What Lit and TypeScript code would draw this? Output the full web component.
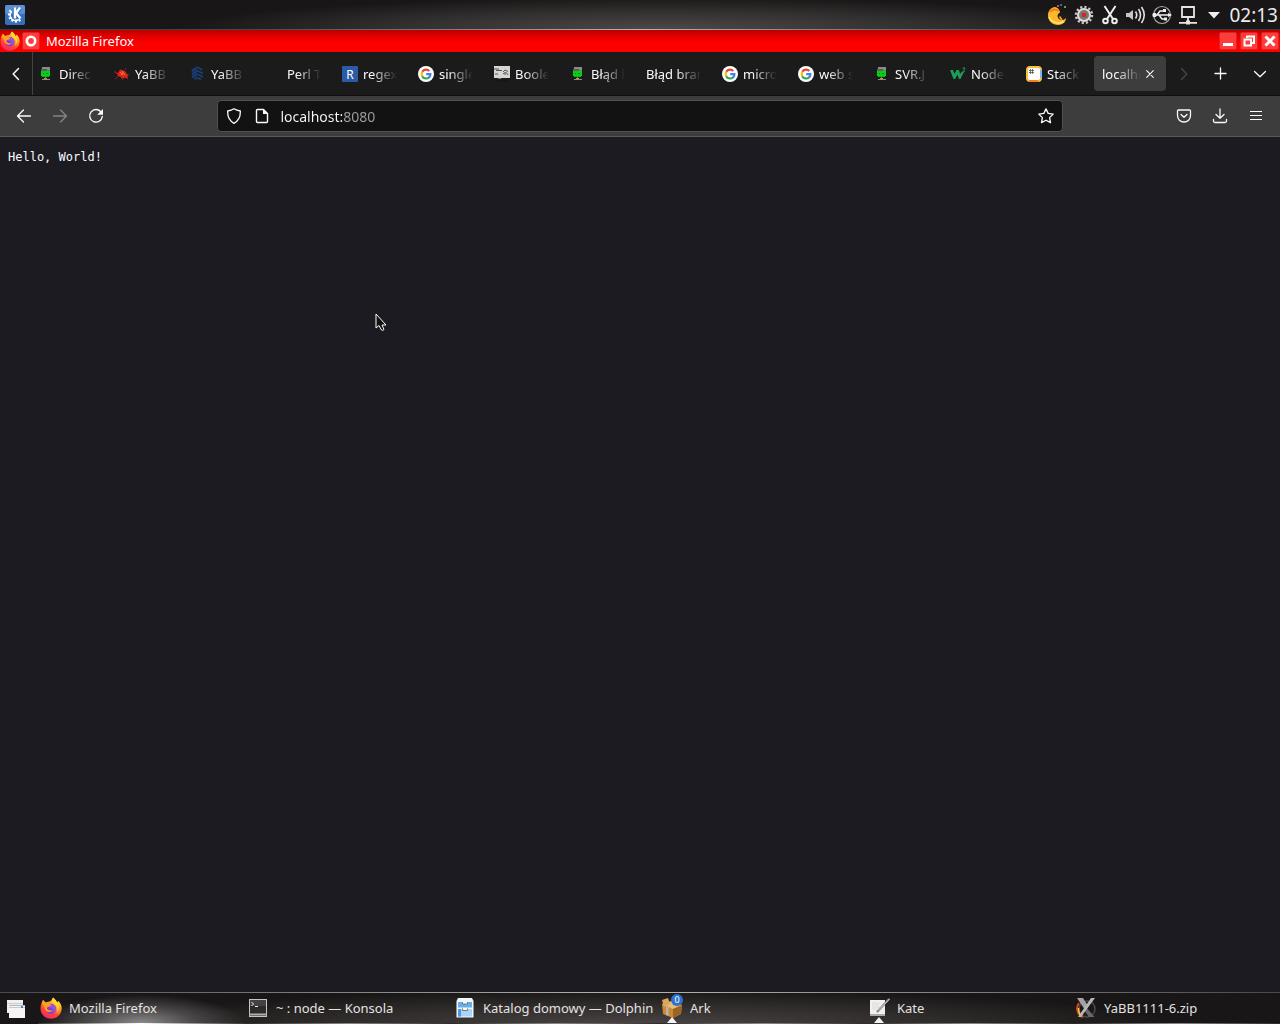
import { LitElement, html, svg, css, nothing, type SVGTemplateResult } from "lit";
import { customElement, property } from "lit/decorators.js";

const icon = (w: number, h: number, body: SVGTemplateResult) =>
  html`<svg width=${w} height=${h} viewBox="0 0 ${w} ${h}" aria-hidden="true">${body}</svg>`;

const line = (d: string, sw = 1.3) =>
  svg`<path d=${d} fill="none" stroke="currentColor" stroke-width=${sw} stroke-linecap="round" stroke-linejoin="round"/>`;

const firefox = (size: number) => html`<svg width=${size} height=${size} viewBox="0 0 22 22" aria-hidden="true">
  <defs>
    <linearGradient id="ff-body" x1="0.8" y1="0" x2="0.3" y2="1">
      <stop offset="0.1" stop-color="#ffe22e"/><stop offset="0.4" stop-color="#ff9a1f"/>
      <stop offset="0.7" stop-color="#ff4338"/><stop offset="1" stop-color="#f0276c"/>
    </linearGradient>
  </defs>
  <path d="M13 0.5C15.5 2.5 16.5 4 17 5.5L18.5 4C21 6.5 22 9.5 21.6 12.5C21 18 16.500 21.700 11 21.700C5 21.700 0.500 17.200 0.500 11.500C0.500 9 1.200 7 2.500 5L3 3L5.500 5.500L8 4.800C10 4.500 11 4 11.500 3Z" fill="url(#ff-body)"/>
  <circle cx="11" cy="12" r="5" fill="#7f3fd0"/>
  <path d="M9 7C12 6 15.500 8 15.800 11.500C16 14 14.500 16 12.500 17C14 15 14 12.500 12.500 11.500C11.500 10.500 9.500 11 8.500 10Z" fill="#a04fe0"/>
  <path d="M1.500 6L3 3L6 5.800C8 5 10 6 11 8.500L8 10C6.500 10.500 6.500 12 8.500 13C10.500 14 12 13.500 13 13C11.500 15.800 7 16 5 12.500C4 10.500 5 8.500 3 8Z" fill="#ff9f22"/>
  <path d="M13 0.500C12 3.500 12.500 5.500 15 7.500C17.500 9.500 18 13 16.500 16C20 12.500 19.500 8 17 5.500C16.500 4 15.500 2.500 13 0.500Z" fill="#ffdb2b"/>
</svg>`;

const favicons: Record<string, SVGTemplateResult> = {
  head: svg`<g shape-rendering="crispEdges">
    <rect x="4" y="1" width="8" height="3" fill="#8b8b8b"/><rect x="3" y="3" width="6" height="2" fill="#5c5c5c"/><rect x="9" y="4" width="3" height="1" fill="#777"/>
    <rect x="3" y="5" width="9" height="5" fill="#00d413"/><rect x="4" y="10" width="7" height="1" fill="#00b80f"/>
    <rect x="5" y="7" width="1" height="1" fill="#057a0c"/><rect x="8" y="7" width="2" height="1" fill="#057a0c"/>
    <rect x="7" y="11" width="1" height="2" fill="#777"/><rect x="6" y="12" width="3" height="1" fill="#e08a35"/><rect x="4" y="13" width="8" height="1" fill="#8e8a86"/></g>`,
  fish: svg`<path d="M0 6L4 7L6 3.500L11 5L13 8L15 8.500L13.500 10L14 13L11 11.500L8 13L7 11L3 10L4 8.500Z" fill="#d9261a"/>
    <path d="M0 5L3 7M4 11L1 13M8 12L9 14M11 4L12 2" stroke="#8a1c14"/><path d="M6 6L9 9M8 5L11 9M7 9L9 6" stroke="#ff6a3c"/>`,
  leaf: svg`<path d="M1.500 3L7 0V15L2 12Z" fill="#17305c"/><path d="M7 1L12.500 4M7 4.500L13 7.500M7 8L13 11M7 11.500L11 13.500" stroke="#1d3f70" stroke-width="1.800"/><path d="M2 5L7 2M2 8L7 5M2 11L7 8" stroke="#21477e" stroke-width="0.800"/>`,
  blank: svg``,
  regex: svg`<rect width="16" height="16" rx="1" fill="#2c5aa5"/><text x="8" y="12.500" text-anchor="middle" font-size="12" fill="#fff">R</text>`,
  google: svg`<circle cx="8" cy="8" r="8" fill="#fff"/><g fill="none" stroke-width="2.200">
    <path d="M4.300 5.800A4.400 4.400 0 0 1 11.300 5" stroke="#ea4335"/><path d="M4.300 10.300A4.600 4.600 0 0 1 4.300 5.700" stroke="#fbbc05"/>
    <path d="M11.200 11.300A4.500 4.500 0 0 1 4.200 10.200" stroke="#34a853"/><path d="M8.200 8.200H12.400A4.400 4.400 0 0 1 11 11.500" stroke="#4285f4"/></g>`,
  bool: svg`<rect width="16" height="12" fill="#d6d6d4"/><path d="M0 3H5M2 4.500H8M9 6L11 4L14 5.500M9 8Q12 4.500 14 9M11 7V9M1 8H4" stroke="#4a4a4a" stroke-width="0.900" fill="none"/>
    <path d="M3 12H8L6 13Z" fill="#999"/><path d="M2 14H14V16H3Z" fill="#14151d"/>`,
  w3: svg`<path d="M0 4H3L4.500 8L6.500 4H9L10 8L12 5.500H14L10.500 13H9L7.500 8.500L5 13H3.500Z" fill="#1b9e55"/><path d="M12.500 2H15L13.700 4Q16 5.500 12.800 6.500" fill="none" stroke="#1b9e55"/>`,
  stack: svg`<rect x="1" y="1" width="14" height="14" rx="3" fill="#fff" stroke="#f6c23b" stroke-width="2"/><path d="M15 4V12" stroke="#78b6ee" stroke-width="2"/><path d="M3 15H12" stroke="#f48024" stroke-width="2"/>
    <path d="M4.500 3V8M6.500 3V8M3 4.500H8M3 6.500H8" stroke="#555" stroke-width="0.800"/>`,
};

interface Tab { label: string; icon?: string; active?: boolean }

const tabs: Tab[] = [
  { label: "Direc", icon: "head" },
  { label: "YaBB", icon: "fish" },
  { label: "YaBB", icon: "leaf" },
  { label: "Perl T", icon: "blank" },
  { label: "regex", icon: "regex" },
  { label: "single", icon: "google" },
  { label: "Boole", icon: "bool" },
  { label: "Błąd b", icon: "head" },
  { label: "Błąd bran" },
  { label: "micro", icon: "google" },
  { label: "web s", icon: "google" },
  { label: "SVR.J", icon: "head" },
  { label: "Node", icon: "w3" },
  { label: "Stack", icon: "stack" },
  { label: "localhost", active: true },
];

const back = line("M14.500 8H1.800M7.500 2L1.500 8L7.500 14");

@customElement("browser-tab")
class BrowserTab extends LitElement {
  @property({ attribute: false }) tab!: Tab;

  static styles = css`
    :host { display: flex; flex: 0 0 76px; padding: 4px 2px; box-sizing: border-box; min-width: 0; }
    .tab { display: flex; align-items: center; flex: 1; min-width: 0; padding: 0 8px; border-radius: 4px; }
    .active { background: #3d3d3d; }
    button { border: 0; padding: 0; background: none; color: inherit; font: inherit; }
    .select { display: flex; align-items: center; gap: 5px; flex: 1; min-width: 0; height: 100%; }
    .name { flex: 1; min-width: 0; overflow: hidden; white-space: nowrap; text-align: left; line-height: 20px;
      mask-image: linear-gradient(to left, transparent 1px, #000 26px); }
    .close { display: flex; align-items: center; justify-content: center; width: 16px; height: 20px; flex: none; }
    svg { flex: none; display: block; }
  `;

  render() {
    const { label, icon: name, active } = this.tab;
    return html`<div class="tab ${active ? "active" : ""}">
      <button class="select" type="button" role="tab" aria-selected=${active ? "true" : "false"}>
        ${name ? icon(16, 16, favicons[name]) : nothing}<span class="name">${label}</span>
      </button>
      ${active ? html`<button class="close" type="button" aria-label="Close tab">${icon(8, 8, line("M0.700 0.700L7.300 7.300M7.300 0.700L0.700 7.300", 1.1))}</button>` : nothing}
    </div>`;
  }
}

const tray: { name: string; body: SVGTemplateResult }[] = [
  { name: "Night mode", body: svg`<path d="M8 3C3.500 3.500 1 7 1 11.500C1 17 5.500 21 11 21C15.500 21 19 18 19 14C17.500 16 14 17 12 15C10 13 10 10 13 8.500C13 6 11 3.500 8 3Z" fill="#fbb829"/><path d="M2 13C4.500 19 12 20.500 17 17.500" stroke="#ffdf6b" stroke-width="1.800" fill="none"/><path d="M3 8C5 5 9 4.500 11.500 7" stroke="#ef7a20" stroke-width="2" fill="none"/><path d="M12.500 12.500L15 16" stroke="#f1912a" stroke-width="2"/><rect x="10" y="1" width="2" height="2" fill="#d34a24"/><rect x="13" y="0" width="2" height="2" fill="#3469bd"/><rect x="17" y="2" width="2" height="2" fill="#58a83a"/>` },
  { name: "Services", body: svg`<circle cx="11" cy="11" r="8" fill="none" stroke="#c8c6c5" stroke-width="2.500" stroke-dasharray="2.200 2"/><circle cx="11" cy="11" r="6" fill="#777" stroke="#dedbda" stroke-width="2"/><rect x="9" y="9" width="4" height="4" fill="#e3221c"/>` },
  { name: "Clipboard", body: svg`<g fill="none" stroke="#eee" stroke-width="2"><path d="M5.500 2L14 15M16.500 2L8 15"/><circle cx="6.500" cy="17" r="2.300"/><circle cx="15.500" cy="17" r="2.300"/></g>` },
  { name: "Volume", body: svg`<path d="M1 9H4L8 6V16L4 13H1Z" fill="#c8c6c5"/><path d="M10.500 7.500Q13 11 10.500 14.500M13.500 5Q17.500 11 13.500 17M16.500 3Q22 11 16.500 19" fill="none" stroke="#e2e0df" stroke-width="1.600"/>` },
  { name: "Removable devices", body: svg`<circle cx="11" cy="11" r="8.500" fill="none" stroke="#a9a7a6" stroke-width="1.200"/><path d="M2 11H20M6 11L9 7H12M8 11L11 15H14" fill="none" stroke="#eee" stroke-width="1.500"/><circle cx="3.500" cy="11" r="2.200" fill="#eee"/><path d="M12 5H15V8H12ZM13 13.500H16V16.500H13ZM17 9L21 11L17 13Z" fill="#eee"/>` },
  { name: "Network", body: svg`<path d="M5 3H17V13H5ZM11 13V18M2 18.800H9M13 18.800H20" fill="none" stroke="#e7e5e4" stroke-width="1.800"/><rect x="9" y="16.500" width="4" height="4" fill="#e7e5e4"/>` },
  { name: "Show hidden icons", body: svg`<path d="M5 8H17L11 14.500Z" fill="#eee"/>` },
];

const tasks: { label: string; body?: SVGTemplateResult; badge?: string; group?: boolean }[] = [
  { label: "Mozilla Firefox" },
  { label: "~ : node — Konsola", body: svg`<rect x="2.500" y="2.500" width="17" height="17" fill="#2e2b2b" stroke="#c6c4c4"/><rect x="3" y="3" width="16" height="6" fill="#454242"/><path d="M2 17.500H20" stroke="#b0aeae" stroke-width="2"/><path d="M4.500 5L6.500 7L4.500 9M8 9.500H11" fill="none" stroke="#f2f2f2"/>` },
  { label: "Katalog domowy — Dolphin", body: svg`<path d="M4 1H18L19.500 4V20.500H2.500V4Z" fill="#f2f7fc"/><rect x="4" y="5" width="14" height="5.500" fill="#66aef0"/><rect x="4" y="12" width="14" height="7.500" fill="#a9d3f9"/><path d="M4 12V19.500H7V12Z" fill="#4f96e4"/><path d="M8.500 5V7H13.500V5M8.500 11.500V13.500H13.500V11.500" fill="#fff" stroke="#777"/>` },
  { label: "Ark", badge: "0", group: true, body: svg`<path d="M1 7L11 4L21 8L20 17L12 21L2 17Z" fill="#c78a3b"/><path d="M1 7L11 4L21 8L12 12Z" fill="#e9bd73"/><path d="M12 12L21 8L20 17L12 21Z" fill="#9c6423"/><path d="M1 3L7 1L9 7L3 10Z" fill="#dca75a"/><path d="M5 9V18L7.500 19V10Z" fill="#bcb2a5"/>` },
  { label: "Kate", group: true, body: svg`<rect x="2" y="3" width="15" height="16" fill="#f1f1ef"/><path d="M2 18H17" stroke="#aaa" stroke-width="2"/><path d="M4 6H12M4 8H11M4 10H12M4 12H9" stroke="#dadada"/><path d="M21 2L9 15" stroke="#777" stroke-width="2"/><path d="M22 1.500L10 13.500" stroke="#e1e1e1"/>` },
  { label: "YaBB1111-6.zip", body: svg`<circle cx="12" cy="12" r="8" fill="none" stroke="#4b4949" stroke-width="1.500"/><path d="M4 6C0 11 3 19 8 20" fill="none" stroke="#e0451d" stroke-width="2"/><path d="M3.500 11C3.500 15 5 18 7 19" fill="none" stroke="#ffca3a" stroke-width="1.500"/><path d="M11 10L19.500 20H14L9 13Z" fill="#6a6868"/><path d="M2 1H8L13 9L10 13Z" fill="#a5a3a3"/><path d="M20 1H16L3 20H6Z" fill="#b9b8b8"/>` },
];

@customElement("app-root")
class AppRoot extends LitElement {
  static styles = css`
    :host { display: flex; flex-direction: column; min-height: 100vh; background: #1c1b22; color: #fbfbfe;
      font: 13px "Noto Sans", "Open Sans", sans-serif; }
    * { box-sizing: border-box; }
    button { border: 0; padding: 0; margin: 0; background: none; color: inherit; font: inherit; display: flex; align-items: center; justify-content: center; }
    svg { display: block; flex: none; }
    .panel { display: flex; align-items: center; justify-content: space-between; height: 30px; padding: 0 2px 0 4px;
      border-bottom: 1px solid; border-image: linear-gradient(to right, #3c3a3a, #4a4848 20%, #b8b5b5 50%, #4a4848 80%, #3c3a3a) 1;
      background: radial-gradient(ellipse 38% 110% at 52% 100%, #4d4848, #322f2f 55%, #181616 100%); }
    .tray { display: flex; align-items: center; gap: 4px; }
    .clock { font-size: 19px; line-height: 28px; color: #eeecec; }
    .titlebar { display: flex; align-items: center; height: 22px; padding-right: 1px; background: linear-gradient(#b80000, #e40000 30%, #fd0000 60%, #fd0000); }
    .titlebar .caption { flex: 1; padding-left: 6px; font-size: 13px; font-weight: 400; line-height: 20px; margin: 0; }
    .wm { width: 18px; height: 18px; border-radius: 2px; background: #ff3c3c; border: 1px solid #e12020; }
    .wms { display: flex; gap: 3px; }
    .pin { margin-left: 2px; }
    .tabstrip { display: flex; height: 44px; background: #1c1b1b; border-bottom: 1px solid #0e0e0e; }
    .prev { flex: 0 0 33px; border-right: 1px solid #444; }
    .tabs { display: flex; flex: 1; min-width: 0; overflow: hidden; justify-content: flex-end; }
    .side { flex: 0 0 40px; }
    .next { flex: 0 0 32px; color: #484646; }
    .toolbar { display: flex; align-items: center; height: 41px; padding: 0 6px; background: #3d3d3d; border-bottom: 1px solid #5a5959; }
    .tool { flex: 0 0 36px; height: 32px; }
    .dim { color: #858484; }
    .spring { flex: 1; }
    .url { flex: 8; display: flex; align-items: center; height: 32px; min-width: 0; padding: 0 8px; gap: 12px; background: #121212; border: 1px solid #505050; border-radius: 4px; }
    .address { flex: 1; min-width: 0; border: 0; padding: 2px 0 0; margin-left: -2px; outline: 0; font: 14px/20px "Noto Sans", "Open Sans", sans-serif;
      color: transparent; caret-color: #fbfbfe; background: linear-gradient(to right, #fbfbfe 62px, #a09fa1 62px); background-clip: text; -webkit-background-clip: text; }
    .page { flex: 1; }
    .page pre { margin: 0; padding: 13px 8px; font: 12px/14px "DejaVu Sans Mono", monospace; }
    .pointer { position: absolute; left: 375px; top: 313px; }
    .taskbar { display: flex; height: 32px; color: #e4e2e2; background: radial-gradient(ellipse 42% 110% at 50% 100%, #4a4444, #302c2c 55%, #181616 100%);
      border-top: 1px solid; border-image: linear-gradient(to right, #4a4848, #b8b5b5 50%, #4a4848) 1; }
    .pager { flex: 0 0 32px; }
    .tasks { display: flex; flex: 1; min-width: 0; padding-left: 6px; }
    .task { flex: 1 1 0; min-width: 0; justify-content: flex-start; gap: 7px; padding-left: 2px; white-space: nowrap; border-bottom: 1px solid;
      border-image: linear-gradient(to right, #2c2929, #8a8787 50%, #2c2929) 1; }
    .current { background: radial-gradient(ellipse 50% 95% at 50% 100%, #8b8989, #4b4949 50%, transparent 100%); border-image: linear-gradient(to right, #333, #fff 50%, #333) 1; }
    .mark { position: relative; }
    .badge { position: absolute; top: -3px; right: 0; width: 12px; height: 12px; border-radius: 6px; background: #2b73ce; color: #fff; font-size: 9px; line-height: 12px; text-align: center; }
    .group { position: absolute; left: 6px; bottom: -4px; }
  `;

  render() {
    return html`
      <header class="panel">
        <button type="button" aria-label="Application launcher">${icon(22, 22, svg`<rect x="1" y="1" width="20" height="20" rx="2" fill="#3470bd"/><rect x="1" y="1" width="20" height="9" rx="2" fill="#5b91d3"/><path d="M7 6.500A6.200 6.200 0 1 0 16.500 15" fill="none" stroke="#fff" stroke-width="3" stroke-dasharray="1.800 1.600"/><path d="M7.500 7.500A5.200 5.200 0 1 0 15.500 14.800" fill="none" stroke="#fff" stroke-width="1.400"/><path d="M11 4V14M16 4L12 9L16.500 14" fill="none" stroke="#3470bd" stroke-width="4.500"/><path d="M11 3.500V14.500M16 3.500L12 9L16.500 14.500" fill="none" stroke="#fff" stroke-width="2.400"/>`)}</button>
        <div class="tray">
          ${tray.map((t) => html`<button type="button" aria-label=${t.name}>${icon(22, 22, t.body)}</button>`)}
          <time class="clock">02:13</time>
        </div>
      </header>
      <div class="titlebar">
        ${firefox(20)}
        <button class="wm pin" type="button" aria-label="On all desktops">${icon(12, 12, svg`<circle cx="6" cy="6" r="4.200" fill="none" stroke="#fff" stroke-width="2.600"/>`)}</button>
        <h1 class="caption">Mozilla Firefox</h1>
        <div class="wms">
          <button class="wm" type="button" aria-label="Minimize">${icon(14, 14, svg`<rect x="2" y="9" width="10" height="3" fill="#fff"/>`)}</button>
          <button class="wm" type="button" aria-label="Restore">${icon(14, 14, svg`<path d="M5 4V2.500H12V9H10M2.500 5.500H9V11.500H2.500Z" fill="none" stroke="#fff" stroke-width="2"/>`)}</button>
          <button class="wm" type="button" aria-label="Close">${icon(14, 14, svg`<path d="M2.500 2.500L11.500 11.500M11.500 2.500L2.500 11.500" stroke="#fff" stroke-width="3"/>`)}</button>
        </div>
      </div>
      <nav class="tabstrip">
        <button class="prev" type="button" aria-label="Scroll tabs left">${icon(8, 14, line("M6.500 1.500L1.200 7L6.500 12.500", 1.5))}</button>
        <div class="tabs" role="tablist">${tabs.map((t) => html`<browser-tab .tab=${t}></browser-tab>`)}</div>
        <button class="next" type="button" aria-label="Scroll tabs right">${icon(8, 14, line("M1.500 1.500L6.800 7L1.500 12.500", 1.3))}</button>
        <button class="side" type="button" aria-label="New tab">${icon(13, 13, line("M6.500 1V12M1 6.500H12"))}</button>
        <button class="side" type="button" aria-label="List all tabs">${icon(14, 8, line("M1.500 1.500L7 6.800L12.500 1.500"))}</button>
      </nav>
      <div class="toolbar">
        <button class="tool" type="button" aria-label="Back">${icon(16, 16, back)}</button>
        <button class="tool dim" type="button" aria-label="Forward">${icon(16, 16, line("M1.500 8H14.200M8.500 2L14.500 8L8.500 14"))}</button>
        <button class="tool" type="button" aria-label="Reload">${icon(16, 16, svg`${line("M13.200 4.200A6.300 6.300 0 1 0 14.300 8.500", 1.4)}<path d="M15 1V6.800H9.200Z" fill="currentColor"/>`)}</button>
        <span class="spring"></span>
        <div class="url">
          ${icon(16, 16, line("M8 0.800C10 2 12 2.600 14.300 3C14.600 9 12.500 13 8 15.300C3.500 13 1.400 9 1.700 3C4 2.600 6 2 8 0.800Z"))}
          ${icon(16, 16, svg`${line("M3.500 1.500H9.500L13.500 5.500V13.500Q13.500 14.500 12.500 14.500H3.500Q2.500 14.500 2.500 13.500V2.500Q2.500 1.500 3.500 1.500Z", 1.4)}<path d="M9 1V6H14Z" fill="currentColor"/>`)}
          <input class="address" type="text" aria-label="Address" spellcheck="false" value="localhost:8080">
          <button type="button" aria-label="Bookmark this page">${icon(16, 16, line("M8 0.900L10.200 5.400L15.200 6.100L11.600 9.600L12.500 14.600L8 12.200L3.500 14.600L4.400 9.600L0.800 6.100L5.800 5.400Z"))}</button>
        </div>
        <span class="spring"></span>
        <button class="tool" type="button" aria-label="Save to Pocket">${icon(16, 16, line("M2.500 2H13.500Q14.500 2 14.500 3V7.500C14.500 11.500 11.500 14 8 14S1.500 11.500 1.500 7.500V3Q1.500 2 2.500 2ZM5 6.500L8 9.300L11 6.500"))}</button>
        <button class="tool" type="button" aria-label="Downloads">${icon(16, 16, line("M8 1V10.300M4 6.500L8 10.300L12 6.500M1.500 11.500V13Q1.500 14.500 3 14.500H13Q14.500 14.500 14.500 13V11.500"))}</button>
        <button class="tool" type="button" aria-label="Menu">${icon(16, 16, svg`<path d="M2 3.500H14M2 7.500H14M2 11.500H14" stroke="currentColor"/>`)}</button>
      </div>
      <main class="page"><pre>Hello, World!</pre></main>
      <svg class="pointer" width="13" height="20" viewBox="0 0 13 20" aria-hidden="true"><path d="M1 1V15L4 12.500L6.500 17Q8 18 9 16.500L7 12H11Z" fill="#111" stroke="#fff"/></svg>
      <footer class="taskbar">
        <button class="pager" type="button" aria-label="Show windows">${icon(18, 18, svg`<rect x="0" y="0" width="16" height="13" fill="#efefef"/><path d="M0 3.500H16" stroke="#ccc"/><rect x="2" y="5" width="16" height="13" fill="#f5f5f5"/><path d="M2 7.500H18" stroke="#c5cad2"/><rect x="2" y="5" width="16" height="1" fill="#b5b5b5"/><rect x="14" y="6" width="2" height="2" fill="#4989cf"/>`)}</button>
        <div class="tasks">
          ${tasks.map((t, i) => html`<button class="task ${i === 0 ? "current" : ""}" type="button">
            <span class="mark">${t.body ? icon(22, 22, t.body) : firefox(22)}
              ${t.badge ? html`<span class="badge">${t.badge}</span>` : nothing}
              ${t.group ? html`<svg class="group" width="10" height="6" viewBox="0 0 10 6" aria-hidden="true"><path d="M5 0L10 6H0Z" fill="#f3f3f3"/></svg>` : nothing}
            </span>${t.label}</button>`)}
        </div>
      </footer>`;
  }
}
